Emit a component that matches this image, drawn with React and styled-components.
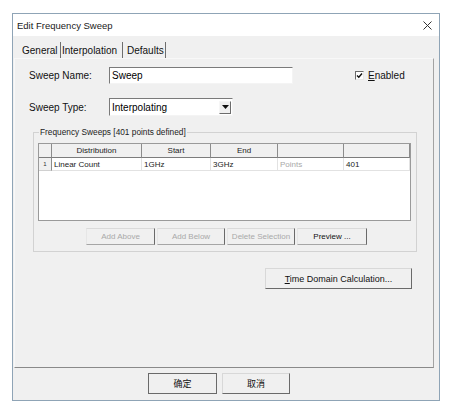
import React from 'react';
import styled, { createGlobalStyle } from 'styled-components';

const GlobalStyle = createGlobalStyle`
  html, body { margin: 0; padding: 0; background: #ffffff; }
  body { font-family: "Liberation Sans", Arial, sans-serif; color: #000; }
  * { box-sizing: border-box; }
`;

const Window = styled.div`
  margin: 13px 0 0 12px;
  width: 428px;
  height: 388px;
  border: 1px solid #8fa4b6;
  background: #f0f0f0;
  display: flex;
  flex-direction: column;
`;

const TitleBar = styled.div`
  height: 22px;
  background: #ffffff;
  display: flex;
  align-items: center;
  justify-content: space-between;
  padding: 0 7px 0 4px;
`;

const Title = styled.span`
  font-size: 9.5px;
  color: #1a1a1a;
`;

const TabStrip = styled.div`
  height: 22px;
  padding: 6px 0 0 7px;
  display: flex;
  align-items: stretch;
`;

const Tab = styled.div`
  width: ${p => p.w}px;
  height: 16px;
  border-right: 1px solid #6e6e6e;
  font-size: 10px;
  padding-left: ${p => p.pl}px;
  display: flex;
  align-items: center;
  color: #111;
`;

const TabPanel = styled.div`
  flex: 1;
  margin: 0 5px 0 1px;
  border-top: 1px solid #f8f8f8;
  border-left: 1px solid #f8f8f8;
  border-right: 1px solid #a3a3a3;
  border-bottom: 1px solid #8a8a8a;
  padding: 8px 16px 0 14px;
  display: flex;
  flex-direction: column;
`;

const Row = styled.div`
  display: flex;
  align-items: center;
  height: ${p => p.h}px;
  margin-top: ${p => p.mt || 0}px;
`;

const Label = styled.span`
  width: 80px;
  font-size: 10px;
  color: #111;
`;

const TextInput = styled.div`
  width: 184px;
  height: 17px;
  background: #fff;
  border-top: 1px solid #7a7a7a;
  border-left: 1px solid #7a7a7a;
  border-right: 1px solid #f4f4f4;
  border-bottom: 1px solid #f4f4f4;
  font-size: 10px;
  padding-left: 2px;
  display: flex;
  align-items: center;
`;

const CheckWrap = styled.label`
  margin-left: 62px;
  display: flex;
  align-items: center;
  font-size: 10px;
  color: #111;
  gap: 4px;
`;

const CheckBox = styled.span`
  width: 9px;
  height: 9px;
  border-top: 1px solid #6a6a6a;
  border-left: 1px solid #6a6a6a;
  border-right: 1px solid #e8e8e8;
  border-bottom: 1px solid #e8e8e8;
  background: #fff;
  display: flex;
  align-items: center;
  justify-content: center;
`;

const Select = styled.div`
  width: 124px;
  height: 18px;
  background: #fff;
  border-top: 1px solid #7a7a7a;
  border-left: 1px solid #7a7a7a;
  border-right: 1px solid #f4f4f4;
  border-bottom: 1px solid #f4f4f4;
  display: flex;
  align-items: center;
  justify-content: space-between;
  font-size: 10px;
  padding: 0 1px 0 2px;
`;

const ArrowButton = styled.span`
  width: 12px;
  height: 13px;
  background: #f0f0f0;
  border-top: 1px solid #f6f6f6;
  border-left: 1px solid #f6f6f6;
  border-right: 1px solid #6c6c6c;
  border-bottom: 1px solid #6c6c6c;
  display: flex;
  align-items: center;
  justify-content: center;
`;

const Group = styled.fieldset`
  margin: 11px 0 0 4px;
  padding: 6px 5px 6px 4px;
  border: 1px solid #d2d2d2;
  min-width: 0;
`;

const Legend = styled.legend`
  font-size: 8.3px;
  line-height: 10px;
  padding: 0 1px;
  margin-left: 1px;
  color: #222;
`;

const Table = styled.div`
  width: 373px;
  height: 78px;
  background: #fff;
  border: 1px solid #9a9a9a;
  display: grid;
  grid-template-columns: 13px 90px 69px 67px 66px 66px;
  grid-template-rows: 14px 13px;
  align-content: start;
`;

const HeadCell = styled.div`
  background: #f0f0f0;
  border-right: 1px solid #8c8c8c;
  border-bottom: 1px solid #7c7c7c;
  font-size: 8px;
  display: flex;
  align-items: center;
  justify-content: center;
  color: #222;
`;

const Cell = styled.div`
  border-right: 1px solid #e2e2e2;
  border-bottom: 1px solid #e2e2e2;
  font-size: 8px;
  display: flex;
  align-items: center;
  padding-left: 2px;
  color: ${p => (p.muted ? '#a8a8a8' : '#222')};
`;

const RowNum = styled.div`
  background: #f0f0f0;
  border-right: 1px solid #8c8c8c;
  border-bottom: 1px solid #d0d0d0;
  font-size: 6px;
  display: flex;
  align-items: center;
  justify-content: center;
  color: #333;
`;

const ButtonRow = styled.div`
  display: flex;
  gap: 2px;
  margin-top: 7px;
  padding-left: 48px;
`;

const SmallButton = styled.div`
  width: ${p => p.w}px;
  height: 17px;
  font-size: 8px;
  background: #f0f0f0;
  border-top: 1px solid #dadada;
  border-left: 1px solid #e6e6e6;
  border-right: 1px solid #6a6a6a;
  border-bottom: 1px solid #a6a6a6;
  display: flex;
  align-items: center;
  justify-content: center;
  color: ${p => (p.disabled ? '#a9a9a9' : '#111')};
`;

const ActionRow = styled.div`
  display: flex;
  justify-content: flex-end;
  margin-top: 16px;
  padding-right: 5px;
`;

const Button = styled.div`
  width: ${p => p.w}px;
  height: 21px;
  font-size: ${p => p.fs || 9}px;
  font-family: "Liberation Sans", "Noto Sans CJK SC", sans-serif;
  background: #f0f0f0;
  border-top: 1px solid ${p => (p.primary ? '#6a6a6a' : '#d8d8d8')};
  border-left: 1px solid ${p => (p.primary ? '#6a6a6a' : '#d8d8d8')};
  border-right: 1px solid #6a6a6a;
  border-bottom: 1px solid #6a6a6a;
  display: flex;
  align-items: center;
  justify-content: center;
  color: #111;
  u { text-decoration: underline; }
`;

const Footer = styled.div`
  height: 32px;
  display: flex;
  align-items: flex-start;
  padding: 5px 0 0 135px;
  gap: 5px;
`;

export default function App() {
  return (
    <>
      <GlobalStyle />
      <Window>
        <TitleBar>
          <Title>Edit Frequency Sweep</Title>
          <svg width="9" height="9" viewBox="0 0 9 9">
            <path d="M0.5 0.5 L8.5 8.5 M8.5 0.5 L0.5 8.5" stroke="#333" strokeWidth="1" fill="none" />
          </svg>
        </TitleBar>
        <TabStrip>
          <Tab w={41} pl={2}>General</Tab>
          <Tab w={62} pl={1}>Interpolation</Tab>
          <Tab w={43} pl={4}>Defaults</Tab>
        </TabStrip>
        <TabPanel>
          <Row h={17}>
            <Label>Sweep Name:</Label>
            <TextInput>Sweep</TextInput>
            <CheckWrap>
              <CheckBox>
                <svg width="7" height="7" viewBox="0 0 7 7">
                  <path d="M1 3.5 L2.8 5.3 L6 1.5" stroke="#111" strokeWidth="1.4" fill="none" />
                </svg>
              </CheckBox>
              <span><u>E</u>nabled</span>
            </CheckWrap>
          </Row>
          <Row h={18} mt={14}>
            <Label>Sweep Type:</Label>
            <Select>
              <span>Interpolating</span>
              <ArrowButton>
                <svg width="7" height="4" viewBox="0 0 7 4">
                  <path d="M0 0 L7 0 L3.5 4 Z" fill="#111" />
                </svg>
              </ArrowButton>
            </Select>
          </Row>
          <Group>
            <Legend>Frequency Sweeps [401 points defined]</Legend>
            <Table>
              <HeadCell />
              <HeadCell>Distribution</HeadCell>
              <HeadCell>Start</HeadCell>
              <HeadCell>End</HeadCell>
              <HeadCell />
              <HeadCell />
              <RowNum>1</RowNum>
              <Cell>Linear Count</Cell>
              <Cell>1GHz</Cell>
              <Cell>3GHz</Cell>
              <Cell muted>Points</Cell>
              <Cell>401</Cell>
            </Table>
            <ButtonRow>
              <SmallButton w={69} disabled>Add Above</SmallButton>
              <SmallButton w={68} disabled>Add Below</SmallButton>
              <SmallButton w={68} disabled>Delete Selection</SmallButton>
              <SmallButton w={70}>Preview ...</SmallButton>
            </ButtonRow>
          </Group>
          <ActionRow>
            <Button w={147}><span><u>T</u>ime Domain Calculation...</span></Button>
          </ActionRow>
        </TabPanel>
        <Footer>
          <Button w={69} primary fs={9}>确定</Button>
          <Button w={68} fs={9}>取消</Button>
        </Footer>
      </Window>
    </>
  );
}
